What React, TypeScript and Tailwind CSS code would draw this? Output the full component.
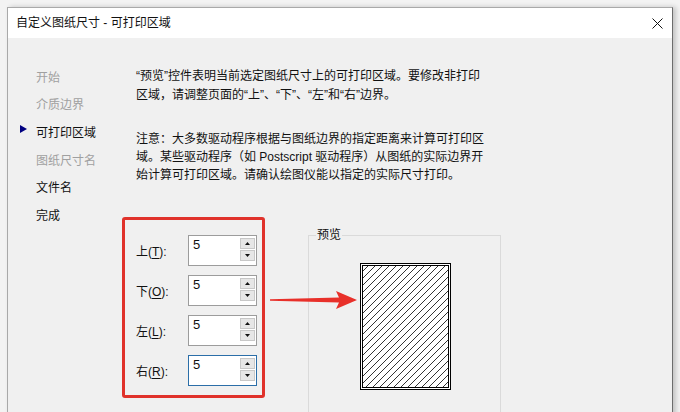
import React from "react";

const navItems: { label: string; enabled: boolean; current?: boolean }[] = [
  { label: "开始", enabled: false },
  { label: "介质边界", enabled: false },
  { label: "可打印区域", enabled: true, current: true },
  { label: "图纸尺寸名", enabled: false },
  { label: "文件名", enabled: true },
  { label: "完成", enabled: true },
];

const fields: { name: string; key: string; focused?: boolean }[] = [
  { name: "上", key: "T" },
  { name: "下", key: "O" },
  { name: "左", key: "L" },
  { name: "右", key: "R", focused: true },
];

function Spin({ focused }: { focused?: boolean }) {
  return (
    <div
      className={
        "w-[69px] h-[31px] bg-white flex border " +
        (focused ? "border-[#2b6ea8]" : "border-[#9c9c9c]")
      }
    >
      <div className="flex-1 pl-[4px] pt-[1px] leading-[16px] text-[13px]">5</div>
      <div className="w-[16px] flex flex-col pt-[2px] pr-[1px] gap-[1px]">
        <div className="h-[11px] bg-[#e6e6e6] border border-[#c8c8c8] flex items-center justify-center">
          <svg width="5" height="3" viewBox="0 0 5 3">
            <polygon points="0,3 2.5,0 5,3" fill="#111" />
          </svg>
        </div>
        <div className="h-[11px] bg-[#e6e6e6] border border-[#c8c8c8] flex items-center justify-center">
          <svg width="5" height="3" viewBox="0 0 5 3">
            <polygon points="0,0 5,0 2.5,3" fill="#111" />
          </svg>
        </div>
      </div>
    </div>
  );
}

function PagePreview() {
  const lines: React.ReactElement[] = [];
  for (let k = -130; k < 100; k += 7) {
    lines.push(<line key={k} x1={k} y1={127} x2={k + 127} y2={0} stroke="#000" strokeWidth="0.8" />);
  }
  return (
    <svg width="91" height="127" viewBox="0 0 91 127">
      <defs>
        <clipPath id="inner">
          <rect x="3" y="3" width="85" height="121" />
        </clipPath>
      </defs>
      <rect x="0" y="0" width="91" height="127" fill="#fff" />
      <g clipPath="url(#inner)">{lines}</g>
      <rect x="0.5" y="0.5" width="90" height="126" fill="none" stroke="#000" strokeWidth="1" />
      <rect x="2.5" y="2.5" width="86" height="122" fill="none" stroke="#000" strokeWidth="1" />
    </svg>
  );
}

export default function App() {
  return (
    <div className="relative w-[680px] h-[412px] overflow-hidden bg-[#f3f3f3] pt-[7px] pl-[7px] font-['Liberation_Sans','Noto_Sans_CJK_SC',sans-serif] text-[12px] text-[#111]">
      <div className="w-[666px] h-[420px] flex flex-col border border-[#a9a9a9] border-r-[#6c6c6c] bg-[#f0f0f0] shadow-[3px_0_5px_rgba(0,0,0,0.2)]">
        <div className="h-[30px] shrink-0 bg-white flex items-center justify-between pl-[8px] pr-[9px]">
          <span className="leading-[16px]">自定义图纸尺寸 - 可打印区域</span>
          <svg width="11" height="11" viewBox="0 0 11 11">
            <line x1="0.5" y1="0.5" x2="10.5" y2="10.5" stroke="#111" strokeWidth="1" />
            <line x1="10.5" y1="0.5" x2="0.5" y2="10.5" stroke="#111" strokeWidth="1" />
          </svg>
        </div>
        <div className="flex flex-1">
          <nav className="w-[128px] shrink-0 pt-[26px]">
            {navItems.map((it) => (
              <div key={it.label} className="h-[27.6px] flex items-center pl-[12px]">
                <span className="w-[16px] flex">
                  {it.current && (
                    <svg width="7" height="8" viewBox="0 0 7 8" className="-mt-[7px]">
                      <polygon points="0,0 7,4 0,8" fill="#000080" />
                    </svg>
                  )}
                </span>
                <span className={it.enabled ? "text-[#111]" : "text-[#a0a0a0]"}>{it.label}</span>
              </div>
            ))}
          </nav>
          <main className="flex-1 pt-[29px]">
            <div className="leading-[19px] whitespace-nowrap">
              <div>“预览”控件表明当前选定图纸尺寸上的可打印区域。要修改非打印</div>
              <div>区域，请调整页面的“上”、“下”、“左”和“右”边界。</div>
            </div>
            <div className="mt-[25px] leading-[18px] whitespace-nowrap">
              <div>注意：大多数驱动程序根据与图纸边界的指定距离来计算可打印区</div>
              <div>域。某些驱动程序（如 Postscript 驱动程序）从图纸的实际边界开</div>
              <div>始计算可打印区域。请确认绘图仪能以指定的实际尺寸打印。</div>
            </div>
            <div className="mt-[33px] -ml-[14px] flex items-start">
              <div className="w-[143px] h-[181px] border-[3px] border-[#e0322b] rounded-[3px] pt-[15px] pl-[11px] flex flex-col gap-[9px]">
                {fields.map((f) => (
                  <div key={f.key} className="flex items-center h-[31px]">
                    <span className="w-[52px] pt-[3px] leading-[16px]">
                      {f.name}(<span className="underline underline-offset-2">{f.key}</span>):
                    </span>
                    <Spin focused={f.focused} />
                  </div>
                ))}
              </div>
              <div className="relative ml-[43px] mt-[18px] w-[193px] h-[200px] border border-[#dadada]">
                <span className="absolute -top-[9px] left-[7px] px-[1px] bg-[#f0f0f0] leading-[16px]">预览</span>
                <div className="mt-[27px] ml-[51px]">
                  <PagePreview />
                </div>
              </div>
            </div>
          </main>
        </div>
      </div>
      <svg className="absolute left-[268px] top-[289px]" width="92" height="22" viewBox="0 0 92 22">
        <polygon
          points="2,10.2 71,8.6 68,2 89,11 68,20 71,13.4 2,11.8"
          fill="#e8302a"
        />
      </svg>
    </div>
  );
}
